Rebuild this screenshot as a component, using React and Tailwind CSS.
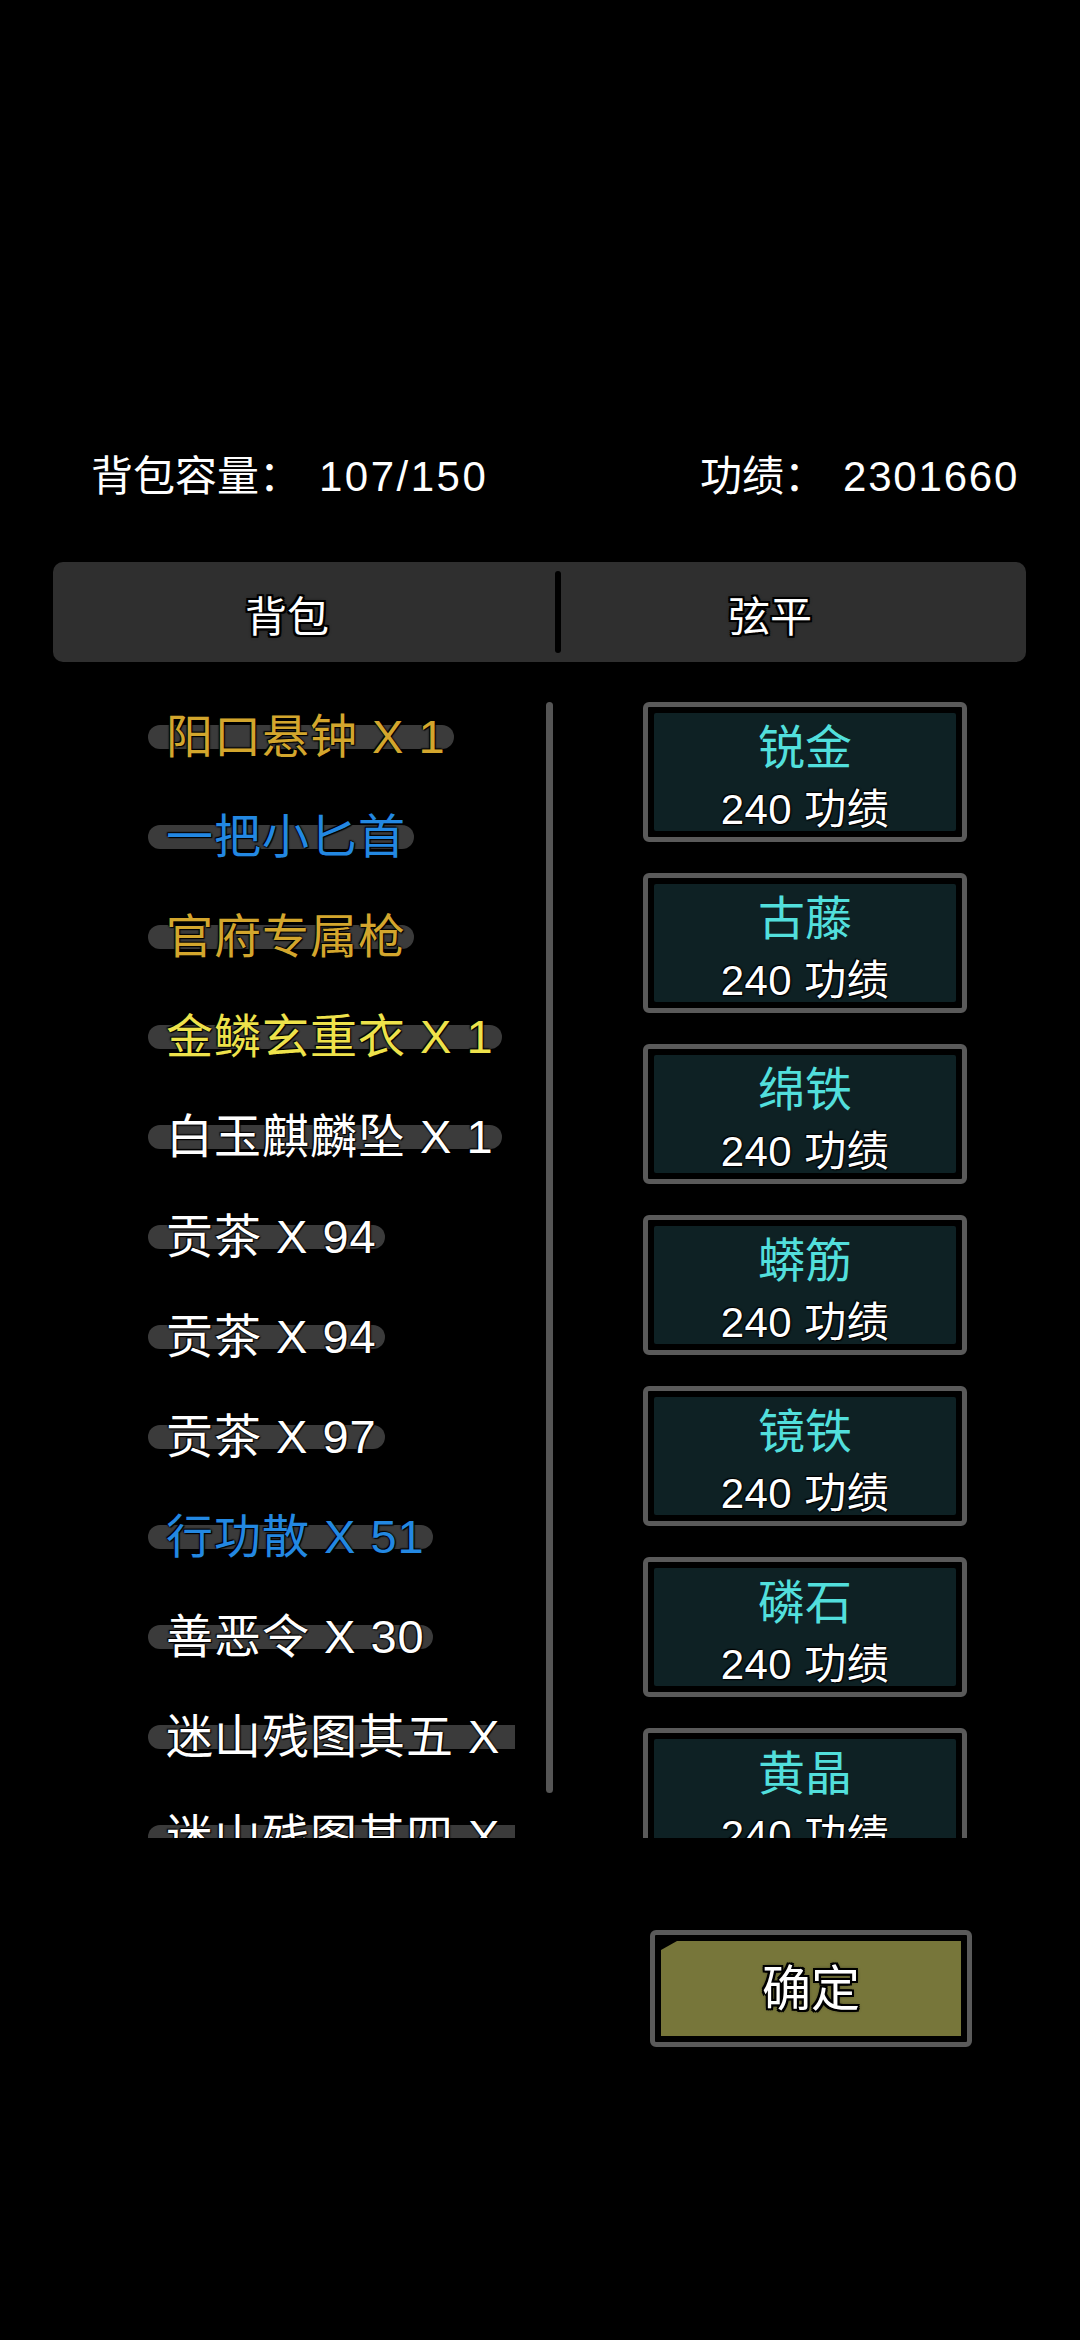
import React from "react";

const items = [
  { name: "阳口悬钟 X 1", color: "text-[#d3a62d]" },
  { name: "一把小匕首", color: "text-[#2388e2]" },
  { name: "官府专属枪", color: "text-[#d3a62d]" },
  { name: "金鳞玄重衣 X 1", color: "text-[#eee24b]" },
  { name: "白玉麒麟坠 X 1", color: "text-white" },
  { name: "贡茶 X 94", color: "text-white" },
  { name: "贡茶 X 94", color: "text-white" },
  { name: "贡茶 X 97", color: "text-white" },
  { name: "行功散 X 51", color: "text-[#2388e2]" },
  { name: "善恶令 X 30", color: "text-white" },
  { name: "迷山残图其五 X 1", color: "text-white" },
  { name: "迷山残图其四 X 1", color: "text-white" },
];

const recipes = ["锐金", "古藤", "绵铁", "蟒筋", "镜铁", "磷石", "黄晶"];

// black halo round the game text
const outline =
  "[text-shadow:0_0_2px_#000,0_0_2px_#000,1px_1px_1px_#000,-1px_-1px_1px_#000]";
const thickOutline =
  "[text-shadow:2px_0_0_#000,-2px_0_0_#000,0_2px_0_#000,0_-2px_0_#000,2px_2px_0_#000,-2px_-2px_0_#000,2px_-2px_0_#000,-2px_2px_0_#000,0_0_4px_#000]";

function BagItem({ item }) {
  return (
    <div className="h-[100px]">
      <span className="relative inline-block whitespace-nowrap pl-[18px] text-[47px] leading-[50px] tracking-[1px]">
        <span className="absolute left-0 right-[-8px] top-[13px] h-[24px] rounded-full bg-[#3b3b3b]" />
        <span className={`relative ${item.color} ${outline}`}>{item.name}</span>
      </span>
    </div>
  );
}

function RecipeCard({ name }) {
  return (
    <div className="h-[140px] w-[324px] shrink-0 rounded-[6px] border-[5px] border-[#5a5a5a] bg-black p-[6px]">
      <div className="flex h-full flex-col items-center rounded-[2px] bg-[#0e2124]">
        <div className="mt-[4px] text-[47px] leading-[62px] text-[#52dfdc]">{name}</div>
        <div className={`whitespace-nowrap text-[42px] leading-[62px] tracking-[0.5px] text-white ${outline}`}>
          240 功绩
        </div>
      </div>
    </div>
  );
}

export default function App() {
  return (
    <div className="h-[2340px] w-[1080px] overflow-hidden bg-black font-['Liberation_Sans','Noto_Sans_CJK_SC',sans-serif] text-white">
      {/* header */}
      <div className="flex pl-[91px] pt-[452px] text-[42px] leading-[50px]">
        <div className="flex w-[609px] whitespace-nowrap">
          <span>背包容量：</span>
          <span className="ml-[18px] tracking-[2.5px]">107/150</span>
        </div>
        <div className="flex whitespace-nowrap">
          <span>功绩：</span>
          <span className="ml-[17px] tracking-[1.8px]">2301660</span>
        </div>
      </div>

      {/* tabs */}
      <div className="ml-[53px] mt-[60px] flex h-[100px] w-[973px] items-center rounded-[10px] bg-[#2f2f2f]">
        <div className={`w-[468px] pt-[12px] text-center text-[42px] leading-[50px] ${thickOutline}`}>
          背包
        </div>
        <div className="ml-[34px] h-[82px] w-[6px] rounded-full bg-black" />
        <div className={`w-[418px] pt-[12px] text-center text-[42px] leading-[50px] ${thickOutline}`}>
          弦平
        </div>
      </div>

      {/* lists */}
      <div className="mt-[38px] flex h-[1138px] overflow-hidden">
        <div className="ml-[148px] h-full w-[367px] shrink-0 overflow-hidden pt-[12px]">
          {items.map((it, i) => (
            <BagItem key={i} item={it} />
          ))}
        </div>
        <div className="ml-[31px] mt-[2px] h-[1091px] w-[7px] shrink-0 rounded-full bg-[#555555]" />
        <div className="ml-[90px] flex flex-col gap-[31px] pt-[2px]">
          {recipes.map((r) => (
            <RecipeCard key={r} name={r} />
          ))}
        </div>
      </div>

      {/* confirm */}
      <div className="ml-[650px] mt-[92px] h-[117px] w-[322px] rounded-[6px] border-[5px] border-[#5a5a5a] bg-black p-[6px]">
        <div className="flex h-full items-center justify-center bg-[#77763a] [clip-path:polygon(0_9px,16px_0,100%_0,100%_100%,0_100%)]">
          <span className={`text-[49px] leading-[60px] ${thickOutline}`}>确定</span>
        </div>
      </div>
    </div>
  );
}
